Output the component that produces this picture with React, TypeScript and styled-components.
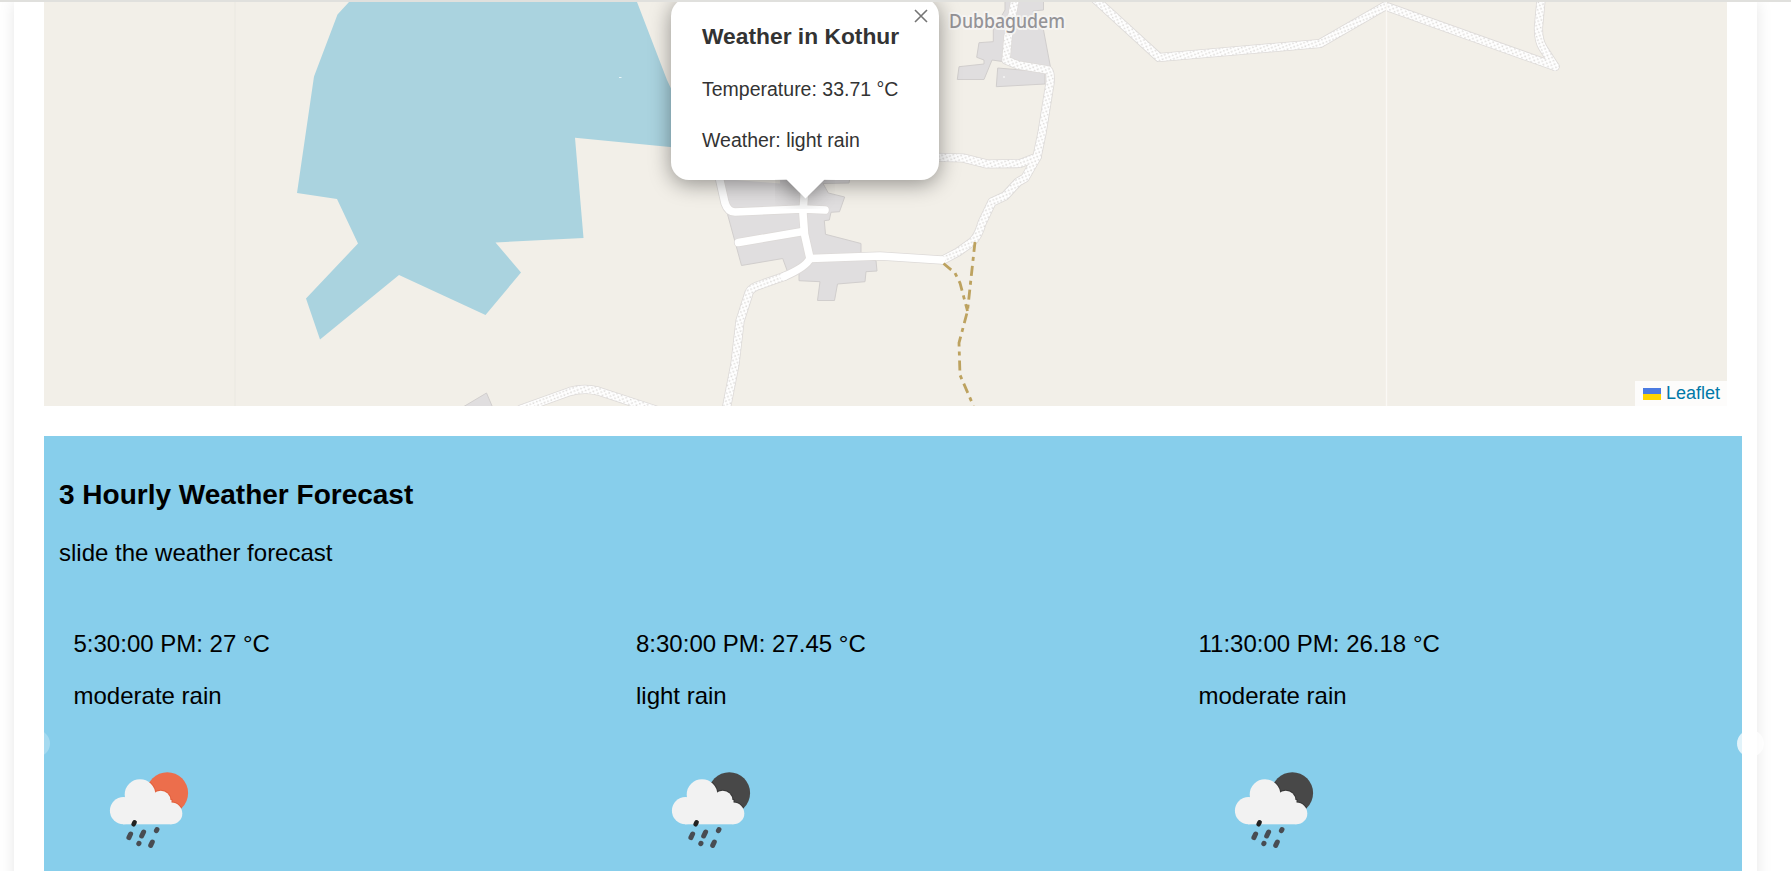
import React from "react";
import styled, { createGlobalStyle } from "styled-components";

const GlobalStyle = createGlobalStyle`
  * { box-sizing: border-box; }
  body {
    margin: 0;
    background: #fff;
    overflow: hidden;
    font-family: "Liberation Sans", Arial, Helvetica, sans-serif;
    font-size: 24px;
    color: #000;
  }
`;

const Page = styled.div`
  display: flex;
  flex-direction: column;
  height: 871px;
  overflow: hidden;
`;

const TopRule = styled.div`
  flex: none;
  height: 2px;
  background: #e0e0dd;
  z-index: 1;
`;

const Container = styled.main`
  flex: 1;
  display: flex;
  flex-direction: column;
  gap: 30px;
  margin: 0 34px 0 14px;
  padding: 0 15px 0 30px;
  background: #fff;
  box-shadow: 0 0 15px rgba(0, 0, 0, 0.1);
`;

const MapFrame = styled.section`
  position: relative;
  flex: none;
  width: 1683px;
  height: 404px;
  overflow: hidden;
  background: #f2efe8;
`;

const MapCanvas = styled.svg`
  display: block;
  width: 100%;
  height: 100%;
`;

const Popup = styled.div`
  position: absolute;
  left: 627px;
  top: -4px;
  width: 268px;
`;

const PopupCard = styled.div`
  padding: 1.5px 30px 1.5px 31px;
  border-radius: 18px;
  background: #fff;
  box-shadow: 0 4px 21px rgba(0, 0, 0, 0.4);
  color: #333;
  font-size: 19.5px;
  line-height: 1.3;
  white-space: nowrap;
  display: flow-root;

  h3 {
    margin: 22.8px 0 25.3px;
    font-size: 22.8px;
  }

  p {
    margin: 25.3px 0;
  }
`;

const TipBox = styled.div`
  width: 60px;
  height: 30px;
  margin: -1px auto 0;
  overflow: hidden;
  position: relative;
`;

const Tip = styled.div`
  width: 27px;
  height: 27px;
  margin: -13px auto 0;
  transform: rotate(45deg);
  background: #fff;
  box-shadow: 0 4px 21px rgba(0, 0, 0, 0.4);
`;

const CloseIcon = styled.svg`
  position: absolute;
  top: 11px;
  right: 11px;
  width: 14px;
  height: 14px;
`;

const Attribution = styled.div`
  position: absolute;
  right: 0;
  bottom: 0;
  display: flex;
  align-items: center;
  gap: 5px;
  height: 25px;
  padding: 0 7px 0 8px;
  background: rgba(255, 255, 255, 0.8);
  color: #0078a8;
  font-size: 18px;
`;

const Flag = styled.span`
  width: 18px;
  height: 12px;
  background: linear-gradient(#4c7be1 50%, #ffd500 50%);
`;

const Forecast = styled.section`
  position: relative;
  flex: 1;
  padding: 15px;
  background: #87ceeb;

  h3 {
    margin: 28px 0;
    font-size: 28px;
    line-height: 32px;
  }
`;

const Text = styled.p`
  margin: 24px 0;
  line-height: 28px;
`;

const Slides = styled.div`
  display: grid;
  grid-template-columns: repeat(3, 562.5px);
`;

const Slide = styled.article`
  padding: 15px 15px 15px 14.5px;
  display: flow-root;

  svg {
    display: block;
    width: 150px;
    height: 150px;
  }
`;

const Arrow = styled.span<{ $side: "left" | "right" }>`
  position: absolute;
  top: 294px;
  ${(p) => (p.$side === "left" ? "left: -21px;" : "right: -22px;")}
  width: 27px;
  height: 27px;
  border-radius: 50%;
  background: #fff;
  opacity: ${(p) => (p.$side === "left" ? 0.25 : 0.75)};
`;

const trackRoads = [
  "M1094 -2 L1159 57.5 L1320 43.5 L1385 6 L1555 66.5",
  "M1541 0 L1538.5 27 Q1538 40 1543 48 L1555 66.5",
  "M1015 0 L1008 37 L1006 60 L1018 65 L1048 70 Q1051 72 1050 83 L1042 133 L1037 157 L1025 178 L1018 182 L1005 196 L992 202 L982 223 Q978 237 972 242 L958 252 L943 260",
  "M925 157 L963 158 L987 164 L1020 163.5 L1037 157",
  "M784 276.5 L757 286 Q749 289 748 296 L740 321 L735 364 L726 410",
  "M521 409 L570 391.5 Q584 387.5 598 391 L656 410",
];

const streets = [
  "M941.5 260 L880 256 L810 258.5",
  "M804.5 190 L803 214 L804.5 234 L810 258.5 Q806 267 784 276.5",
  "M718 172 L725 203 Q728 212 735 212 L803 209 L825 210",
  "M738.5 242.5 L803 231.5",
];

function MapDrawing() {
  return (
    <MapCanvas viewBox="44 2 1683 404" role="img" aria-label="Map of Kothur">
      <defs>
        <pattern id="gravel" width="5" height="5" patternUnits="userSpaceOnUse" patternTransform="rotate(24)">
          <rect width="5" height="5" fill="#fff" />
          <circle cx="1.3" cy="1.2" r="0.95" fill="#dedcda" />
          <circle cx="3.8" cy="3.6" r="0.95" fill="#dedcda" />
        </pattern>
      </defs>
      <path d="M235 0V406" stroke="#eae8e1" strokeWidth="1" />
      <path
        d="M349 2 L337.5 14.5 L314 76.5 L297 193 L337 199 L358 243.5 L306 298.5 L320 339.5 L399 275 L485.5 315 L521 272.5 L495.5 242.5 L583.5 238 L575 137.7 L670 147 L700 150 L667 80 L637 2Z"
        fill="#aad3df"
      />
      <rect x="619" y="77" width="2.5" height="1" fill="#e8f4f7" />
      <g fill="#e0dedf" stroke="#d1cecd" strokeWidth="1">
        <path d="M719 176 L728 216 L741.5 265.5 L782.7 258.5 L787.3 271 L799 272 L799 280.7 L820 281.7 L817.5 300.5 H834.5 L837.5 284 L865 281.7 L866 271.7 L877 271 L876 260.7 L861 256 V243.5 L825.5 234.3 L824.3 220.7 L829.3 220 L831 212.3 L839.5 211.7 L844.7 197 L828.3 193 L823 183.5 L849 183 L851 172Z" />
        <path d="M463 407 L486.5 393 L492.5 407Z" />
        <path d="M1005 0 H1043.5 V10 L1033 11 L1034 16 L1043.5 30 L1051 70 L1006 62 L992 60 L984 79.5 H957.3 L959 66.7 L984 64 V60 L976.7 57.3 L979 42.7 L993.3 41.7 V30 L1005 10Z" />
        <path d="M997.7 68 L1045 72 V84 L996.3 86.7Z" />
      </g>
      <path d="M736 180 L780 183.5 V176Z" fill="#f2efe8" />
      <rect x="1003" y="76.5" width="2" height="1" fill="#fff" />
      <g fill="none" strokeLinejoin="round" strokeLinecap="round">
        <g stroke="#dddad8" strokeWidth="9.2">
          {trackRoads.concat(streets).map((d) => (
            <path key={d} d={d} />
          ))}
        </g>
        <g stroke="url(#gravel)" strokeWidth="7.6">
          {trackRoads.map((d) => (
            <path key={d} d={d} />
          ))}
        </g>
        <g stroke="#fff" strokeWidth="7.6">
          {streets.map((d) => (
            <path key={d} d={d} />
          ))}
        </g>
      </g>
      <g fill="none" stroke="#bda25f" strokeWidth="2.8" strokeDasharray="10 5 4 5">
        <path d="M943.5 263.5 L955 273 L960 283 L967.5 311" />
        <path d="M975 242 L971.5 274 L967.5 311 L959 343 L960 375 L973.5 406" />
      </g>
      <path d="M1386.5 0V406" stroke="#faf9f5" strokeWidth="1.3" />
      <text
        x="949"
        y="28"
        textLength="116"
        lengthAdjust="spacingAndGlyphs"
        fill="#949397"
        stroke="#f7f6f4"
        strokeOpacity="0.85"
        strokeWidth="4"
        strokeLinejoin="round"
        paintOrder="stroke"
        fontFamily="'Noto Sans', sans-serif"
        fontWeight="500"
        fontSize="19.3"
      >
        Dubbagudem
      </text>
    </MapCanvas>
  );
}

function CloudShapes() {
  return (
    <>
      <circle cx="49.5" cy="76.7" r="13.6" />
      <circle cx="66" cy="60.5" r="15.3" />
      <circle cx="86.7" cy="66.5" r="9.8" />
      <circle cx="97.4" cy="79.4" r="10.9" />
      <rect x="49" y="66" width="48.5" height="24.3" />
    </>
  );
}

function RainIcon({ id, disc, edge }: { id: string; disc: string; edge: string }) {
  return (
    <svg viewBox="0 0 150 150" aria-hidden="true">
      <clipPath id={id}>
        <circle cx="93.3" cy="59" r="20.8" />
      </clipPath>
      <circle cx="93.3" cy="59" r="20.8" fill={disc} />
      <g clipPath={`url(#${id})`} fill={edge} stroke={edge} strokeWidth="2">
        <CloudShapes />
      </g>
      <g fill="#f2f2f2">
        <CloudShapes />
      </g>
      <g stroke="#484c52" strokeWidth="5" strokeLinecap="round">
        <path d="M60.6 88.3 L59.6 90.3" stroke="#222" strokeWidth="4.6" />
        <path d="M56.6 100 L54.9 103.6" />
        <path d="M69.6 98 L67.7 102" />
        <path d="M83 95.5 L82.4 96.7" />
        <path d="M65 109.3 L64.8 109.7" />
        <path d="M78.3 108 L76.7 111.4" />
      </g>
    </svg>
  );
}

const slides = [
  { time: "5:30:00 PM", temp: "27", sky: "moderate rain", disc: "#ec6e4c", edge: "#e2603c" },
  { time: "8:30:00 PM", temp: "27.45", sky: "light rain", disc: "#484848", edge: "#383838" },
  { time: "11:30:00 PM", temp: "26.18", sky: "moderate rain", disc: "#484848", edge: "#383838" },
];

export default function App() {
  return (
    <Page>
      <GlobalStyle />
      <TopRule />
      <Container>
        <MapFrame>
          <MapDrawing />
          <Popup>
            <PopupCard>
              <h3>Weather in Kothur</h3>
              <p>Temperature: 33.71 °C</p>
              <p>Weather: light rain</p>
            </PopupCard>
            <TipBox>
              <Tip />
            </TipBox>
            <CloseIcon viewBox="0 0 14 14" aria-label="Close">
              <path d="M1 1 L13 13 M13 1 L1 13" stroke="#757575" strokeWidth="1.6" />
            </CloseIcon>
          </Popup>
          <Attribution>
            <Flag />
            Leaflet
          </Attribution>
        </MapFrame>
        <Forecast>
          <h3>3 Hourly Weather Forecast</h3>
          <Text>slide the weather forecast</Text>
          <Slides>
            {slides.map((s, i) => (
              <Slide key={s.time}>
                <Text>
                  {s.time}: {s.temp} °C
                </Text>
                <Text>{s.sky}</Text>
                <RainIcon id={`disc-${i}`} disc={s.disc} edge={s.edge} />
              </Slide>
            ))}
          </Slides>
          <Arrow $side="left" />
          <Arrow $side="right" />
        </Forecast>
      </Container>
    </Page>
  );
}
